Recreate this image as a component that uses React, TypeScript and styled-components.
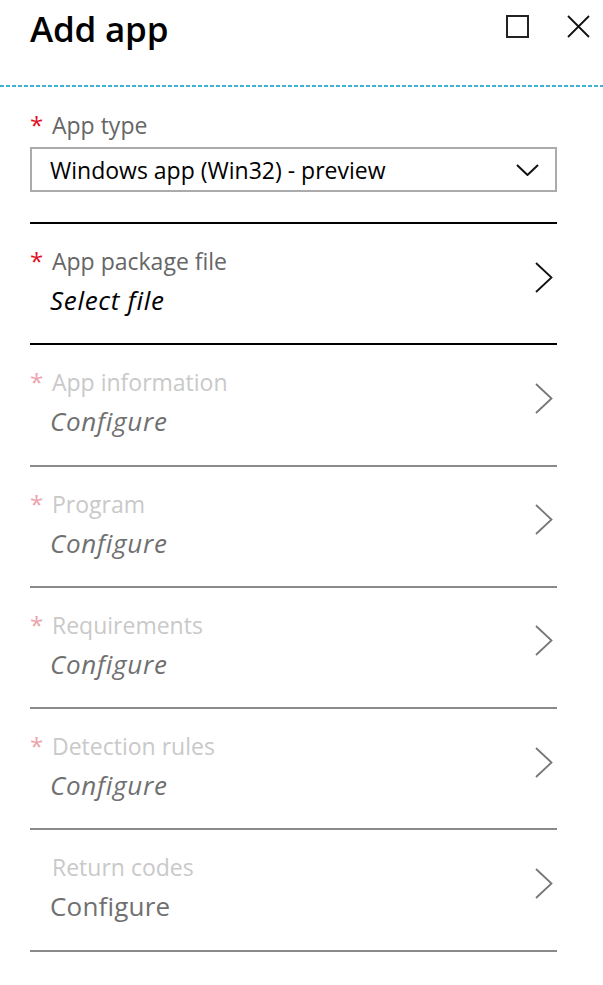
import React from "react";
import styled, { createGlobalStyle } from "styled-components";

const Global = createGlobalStyle`
  html, body { margin: 0; padding: 0; background: #fff; }
  body { font-family: "Open Sans", "Noto Sans", sans-serif; color: #000; }
`;

const Blade = styled.div`
  width: 603px;
  min-height: 985px;
  background: #fff;
`;

const Header = styled.header`
  height: 85px;
  box-sizing: border-box;
  padding: 7px 13px 0 30px;
  display: flex;
  align-items: flex-start;
  justify-content: space-between;
`;

const Title = styled.h1`
  margin: 0;
  font-size: 35px;
  line-height: 44px;
  font-weight: 600;
  letter-spacing: -0.2px;
`;

const HeaderIcons = styled.div`
  display: flex;
  gap: 38px;
  padding-top: 8px;
`;

const IconBtn = styled.span`
  display: block;
  width: 23px;
  height: 23px;
`;

const Dashed = styled.div`
  height: 2px;
  background: repeating-linear-gradient(to right, #3fb0cf 0 4px, transparent 4px 6px);
`;

const Content = styled.div`
  padding: 24px 46px 0 30px;
`;

const LabelRow = styled.div<{ $disabled?: boolean }>`
  display: flex;
  align-items: flex-start;
  font-size: 23px;
  line-height: 28px;
  color: ${(p) => (p.$disabled ? "#c9c9c9" : "#666")};
`;

const Star = styled.span<{ $disabled?: boolean; $hidden?: boolean }>`
  width: 22px;
  flex: none;
  color: ${(p) => (p.$disabled ? "#eca3ab" : "#e3101f")};
  font-size: 24px;
  line-height: 28px;
  visibility: ${(p) => (p.$hidden ? "hidden" : "visible")};
`;

const Select = styled.div`
  margin-top: 8px;
  height: 45px;
  box-sizing: border-box;
  border: 2px solid #ababab;
  display: flex;
  align-items: center;
  justify-content: space-between;
  padding: 0 16px 0 18px;
  font-size: 23px;
  color: #000;
`;

const Divider = styled.div<{ $dark?: boolean }>`
  height: 2px;
  background: ${(p) => (p.$dark ? "#000" : "#8a8a8a")};
`;

const TopDivider = styled(Divider)`
  margin-top: 30px;
`;

const Row = styled.div`
  display: flex;
  align-items: center;
  justify-content: space-between;
  padding: 23px 4px 27.3px 0;
`;

const RowText = styled.div`
  display: flex;
  flex-direction: column;
`;

const Value = styled.div<{ $tone: "black" | "gray"; $italic: boolean }>`
  margin-top: 9px;
  padding-left: 20px;
  font-size: 26px;
  letter-spacing: ${(p) => (p.$italic ? "0.7px" : "0.2px")};
  line-height: 32px;
  font-style: ${(p) => (p.$italic ? "italic" : "normal")};
  color: ${(p) => (p.$tone === "black" ? "#000" : "#707070")};
`;

const Chevron = styled.svg<{ $dark: boolean }>`
  width: 18px;
  height: 31px;
  margin-bottom: 9px;
  stroke: ${(p) => (p.$dark ? "#111" : "#777")};
`;

const rows = [
  { label: "App package file", value: "Select file", required: true, active: true },
  { label: "App information", value: "Configure", required: true, active: false },
  { label: "Program", value: "Configure", required: true, active: false },
  { label: "Requirements", value: "Configure", required: true, active: false },
  { label: "Detection rules", value: "Configure", required: true, active: false },
  { label: "Return codes", value: "Configure", required: false, active: false },
];

export default function App() {
  return (
    <Blade>
      <Global />
      <Header>
        <Title>Add app</Title>
        <HeaderIcons>
          <IconBtn>
            <svg width="23" height="23" viewBox="0 0 23 23">
              <rect x="1" y="1" width="21" height="21" fill="none" stroke="#222" strokeWidth="2" />
            </svg>
          </IconBtn>
          <IconBtn>
            <svg width="23" height="23" viewBox="0 0 23 23">
              <path d="M1 1 L22 22 M22 1 L1 22" stroke="#111" strokeWidth="1.8" fill="none" />
            </svg>
          </IconBtn>
        </HeaderIcons>
      </Header>
      <Dashed />
      <Content>
        <LabelRow>
          <Star>*</Star>
          App type
        </LabelRow>
        <Select>
          <span>Windows app (Win32) - preview</span>
          <svg width="23" height="12" viewBox="0 0 23 12">
            <path d="M1 1 L11.5 11 L22 1" stroke="#111" strokeWidth="2" fill="none" />
          </svg>
        </Select>
        <TopDivider $dark />
        {rows.map((r, i) => (
          <React.Fragment key={r.label}>
            <Row>
              <RowText>
                <LabelRow $disabled={!r.active}>
                  <Star $disabled={!r.active} $hidden={!r.required}>*</Star>
                  {r.label}
                </LabelRow>
                <Value $tone={r.active ? "black" : "gray"} $italic={r.required}>
                  {r.value}
                </Value>
              </RowText>
              <Chevron $dark={r.active} viewBox="0 0 18 31" fill="none" strokeWidth="1.8">
                <path d="M1 1 L16.5 15.5 L1 30" />
              </Chevron>
            </Row>
            <Divider $dark={i === 0} />
          </React.Fragment>
        ))}
      </Content>
    </Blade>
  );
}
